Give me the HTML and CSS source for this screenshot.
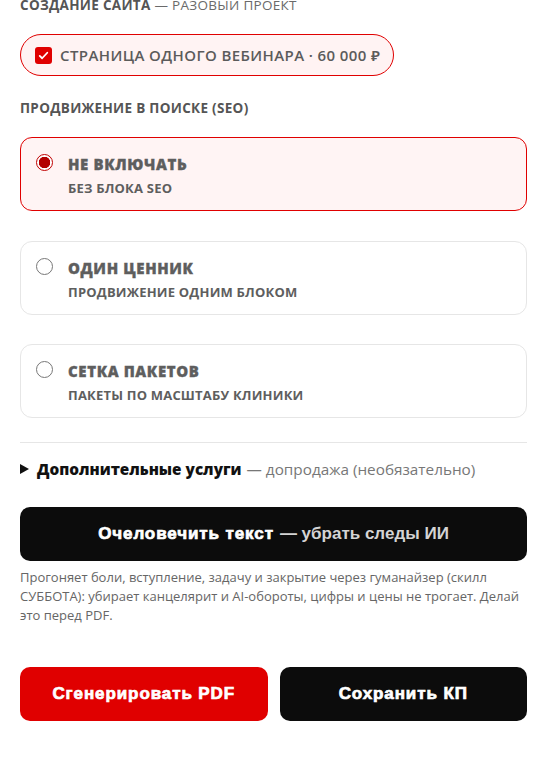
FILE: index.html
```html
<!DOCTYPE html>
<html lang="ru">
<head>
<meta charset="utf-8">
<title>КП</title>
<link rel="stylesheet" href="styles.css">
</head>
<body>
<main class="page">
  <section class="group">
    <h3 class="group-title"><b>Создание сайта</b> — разовый проект</h3>
    <label class="pill">
      <span class="check"><svg viewBox="0 0 16 16" width="11" height="11"><path d="M2.5 8.5l3.5 3.5 7.5-8" fill="none" stroke="#fff" stroke-width="2.6" stroke-linecap="round" stroke-linejoin="round"/></svg></span>
      <span class="pill-text">Страница одного вебинара · 60 000 ₽</span>
    </label>
  </section>

  <section class="group seo">
    <h3 class="group-title"><b>Продвижение в поиске (SEO)</b></h3>
    <div class="options">
      <label class="option selected">
        <span class="radio on"></span>
        <span class="opt-body">
          <span class="opt-title">Не включать</span>
          <span class="opt-sub">Без блока SEO</span>
        </span>
      </label>
      <label class="option">
        <span class="radio"></span>
        <span class="opt-body">
          <span class="opt-title">Один ценник</span>
          <span class="opt-sub">Продвижение одним блоком</span>
        </span>
      </label>
      <label class="option">
        <span class="radio"></span>
        <span class="opt-body">
          <span class="opt-title">Сетка пакетов</span>
          <span class="opt-sub">Пакеты по масштабу клиники</span>
        </span>
      </label>
    </div>
  </section>

  <hr class="divider">

  <div class="extra">
    <span class="tri"></span>
    <span class="extra-title">Дополнительные услуги</span>
    <span class="extra-note">— допродажа (необязательно)</span>
  </div>

  <button class="btn btn-dark btn-wide"><span class="btn-main">Очеловечить текст</span> <span class="btn-note">— убрать следы ИИ</span></button>
  <p class="hint">Прогоняет боли, вступление, задачу и закрытие через гуманайзер (скилл СУББОТА): убирает канцелярит и AI-обороты, цифры и цены не трогает. Делай это перед PDF.</p>

  <div class="actions">
    <button class="btn btn-red"><span class="btn-main">Сгенерировать PDF</span></button>
    <button class="btn btn-dark"><span class="btn-main">Сохранить КП</span></button>
  </div>
</main>
</body>
</html>
```

FILE: styles.css
```css
* { box-sizing: border-box; }
html, body { margin: 0; padding: 0; background: #fff; }
body { font-family: "Open Sans", "Noto Sans", sans-serif; color: #5b5b5b; }

.page { padding: 0 20px 40px; }

.group-title {
  margin: 0;
  font-size: 13.5px;
  line-height: 18px;
  font-weight: 500;
  text-transform: uppercase;
  letter-spacing: 0.3px;
  color: #6a6a6a;
}
.group-title b { font-weight: 700; color: #555; }
.group:first-child .group-title { margin-top: -4px; }

.pill {
  margin-top: 20px;
  display: inline-flex;
  align-items: center;
  gap: 8px;
  height: 42px;
  padding: 0 13px 0 14px;
  border: 1px solid #e00000;
  border-radius: 21px;
  background: #fff3f3;
}
.check {
  width: 17px; height: 17px;
  border-radius: 3px;
  background: #e00000;
  display: flex; align-items: center; justify-content: center;
}
.pill-text {
  font-size: 15px;
  font-weight: 600;
  text-transform: uppercase;
  letter-spacing: 0.4px;
  color: #5b5b5b;
}

.seo { margin-top: 23px; }
.options { margin-top: 20px; display: flex; flex-direction: column; gap: 29.5px; }
.option {
  display: flex;
  align-items: flex-start;
  gap: 15px;
  min-height: 74px;
  padding: 16px 14px 13px 15px;
  border: 1px solid #e6e6e6;
  border-radius: 12px;
  background: #fff;
}
.option.selected { border-color: #e00000; background: #fff4f4; }
.radio {
  flex: none;
  width: 17px; height: 17px;
  border-radius: 50%;
  border: 1px solid #777;
  background: #fff;
}
.radio.on {
  border: 1.5px solid #c00000;
  background: radial-gradient(circle, #b30000 0 5.5px, #fff 6px);
}
.opt-body { display: flex; flex-direction: column; gap: 6px; }
.opt-title {
  font-size: 15px;
  line-height: 20px;
  font-weight: 800;
  text-transform: uppercase;
  letter-spacing: 0.6px;
  -webkit-text-stroke: 0.3px #5e5e5e;
  color: #5e5e5e;
}
.opt-sub {
  font-size: 13px;
  line-height: 17px;
  font-weight: 700;
  text-transform: uppercase;
  letter-spacing: 0.2px;
  color: #5e5e5e;
}

.divider { margin: 24px 0 0; border: 0; border-top: 1px solid #e6e6e6; }

.extra {
  margin-top: 16px;
  display: flex;
  align-items: center;
  font-size: 15.3px;
  line-height: 20px;
}
.tri {
  width: 0; height: 0;
  border-left: 9px solid #111;
  border-top: 5px solid transparent;
  border-bottom: 5px solid transparent;
  margin-right: 8px;
}
.extra-title { font-weight: 800; color: #111; }
.extra-note { margin-left: 5px; color: #777; }

.btn {
  border: 0;
  height: 54px;
  border-radius: 10px;
  font-family: "Liberation Sans", Arial, sans-serif;
  font-size: 17px;
  color: #fff;
  display: flex; align-items: center; justify-content: center;
  padding: 0;
}
.btn-main { font-weight: 900; -webkit-text-stroke: 0.7px #fff; letter-spacing: 0.9px; }
.btn-note { font-weight: 700; color: #d4d4d4; margin-left: 6px; }
.btn-dark { background: #0c0c0c; }
.btn-red { background: #e00000; }
.btn-wide { width: 100%; margin-top: 28px; }

.hint {
  margin: 7px 0 0;
  font-size: 13px;
  line-height: 19px;
  color: #666;
}

.actions {
  margin-top: 42px;
  display: grid;
  grid-template-columns: 1fr 1fr;
  gap: 12px;
}
```
